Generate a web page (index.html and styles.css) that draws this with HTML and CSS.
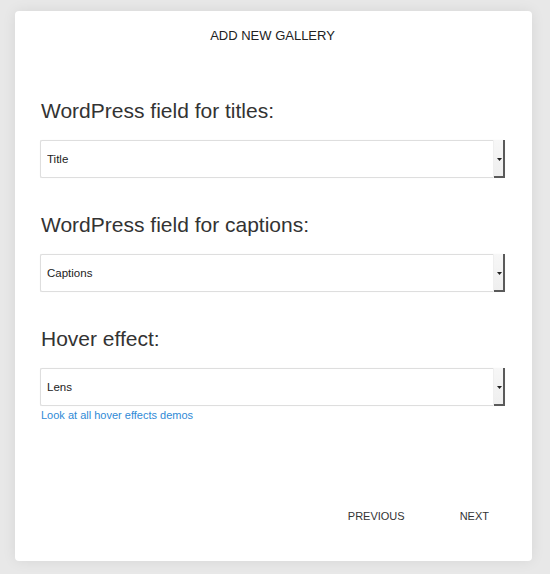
FILE: index.html
```html
<!DOCTYPE html>
<html lang="en">
<head>
    <meta charset="UTF-8">
    <meta name="viewport" content="width=device-width, initial-scale=1.0">
    <title>Add New Gallery</title>
    <link rel="stylesheet" href="styles.css">
</head>
<body>

    <div class="card">
        <h2 class="card-title">ADD NEW GALLERY</h2>

        <div class="field">
            <h3 class="field-label">WordPress field for titles:</h3>
            <div class="select">
                <select class="select-input">
                    <option>Title</option>
                </select>
                <span class="select-btn">
                    <svg width="5" height="3" viewBox="0 0 5 3"><path d="M0 0H5L2.5 3Z" fill="#222"/></svg>
                </span>
            </div>
        </div>

        <div class="field">
            <h3 class="field-label">WordPress field for captions:</h3>
            <div class="select">
                <select class="select-input">
                    <option>Captions</option>
                </select>
                <span class="select-btn">
                    <svg width="5" height="3" viewBox="0 0 5 3"><path d="M0 0H5L2.5 3Z" fill="#222"/></svg>
                </span>
            </div>
        </div>

        <div class="field">
            <h3 class="field-label">Hover effect:</h3>
            <div class="select">
                <select class="select-input">
                    <option>Lens</option>
                </select>
                <span class="select-btn">
                    <svg width="5" height="3" viewBox="0 0 5 3"><path d="M0 0H5L2.5 3Z" fill="#222"/></svg>
                </span>
            </div>
            <a href="#" class="demo-link">Look at all hover effects demos</a>
        </div>

        <div class="card-footer">
            <button class="nav-button">PREVIOUS</button>
            <button class="nav-button">NEXT</button>
        </div>
    </div>

</body>
</html>
```

FILE: styles.css
```css
* {
    margin: 0;
    padding: 0;
    box-sizing: border-box;
}

body {
    height: 100vh;
    width: 100%;
    background-color: #e8e8e8;
    font-family: 'Liberation Sans', Arial, sans-serif;
    color: #333;
    padding: 11px 18px 13px 15px;
    overflow: hidden;
}

.card {
    width: 517px;
    height: 550px;
    background: #fff;
    border-radius: 4px;
    box-shadow: 0 0 14px rgba(0, 0, 0, 0.08);
    padding: 17px 27px 30px 25px;
    display: flex;
    flex-direction: column;
}

.card-title {
    font-size: 13px;
    line-height: 16px;
    font-weight: 400;
    color: #222;
    text-align: center;
    margin-bottom: 55px;
}

.field {
    margin-bottom: 35px;
}

.field-label {
    font-size: 21px;
    line-height: 24px;
    font-weight: 400;
    color: #333;
    margin-bottom: 17px;
    padding-left: 1px;
}

.select {
    display: flex;
    height: 38px;
    border: 1px solid #dedede;
    border-right: none;
    border-radius: 2px;
    background: #fff;
    box-shadow: 0 0 1px rgba(0, 0, 0, 0.08);
}

.select-input {
    flex: 1;
    appearance: none;
    -webkit-appearance: none;
    border: none;
    outline: none;
    background: transparent;
    font-family: 'Liberation Sans', Arial, sans-serif;
    font-size: 11.5px;
    color: #222;
    padding: 0 6px;
}

.select-btn {
    width: 12px;
    margin: -1px 0;
    display: flex;
    align-items: center;
    justify-content: center;
    padding-right: 1px;
    background: linear-gradient(#f7f7f7, #eeeeee);
    border-left: 1px solid #efefef;
    box-shadow: inset -2px -2px 0 #5a5a5a;
}

.demo-link {
    display: block;
    margin-top: 2px;
    font-size: 11px;
    line-height: 14px;
    color: #2f8ad6;
    text-decoration: none;
    padding-left: 1px;
}

.card-footer {
    margin-top: auto;
    display: flex;
    justify-content: flex-end;
    gap: 23px;
}

.nav-button {
    font-family: 'Liberation Sans', Arial, sans-serif;
    font-size: 11px;
    line-height: 14px;
    color: #333;
    background: none;
    border: none;
    padding: 8px 16px;
    cursor: pointer;
}
```
